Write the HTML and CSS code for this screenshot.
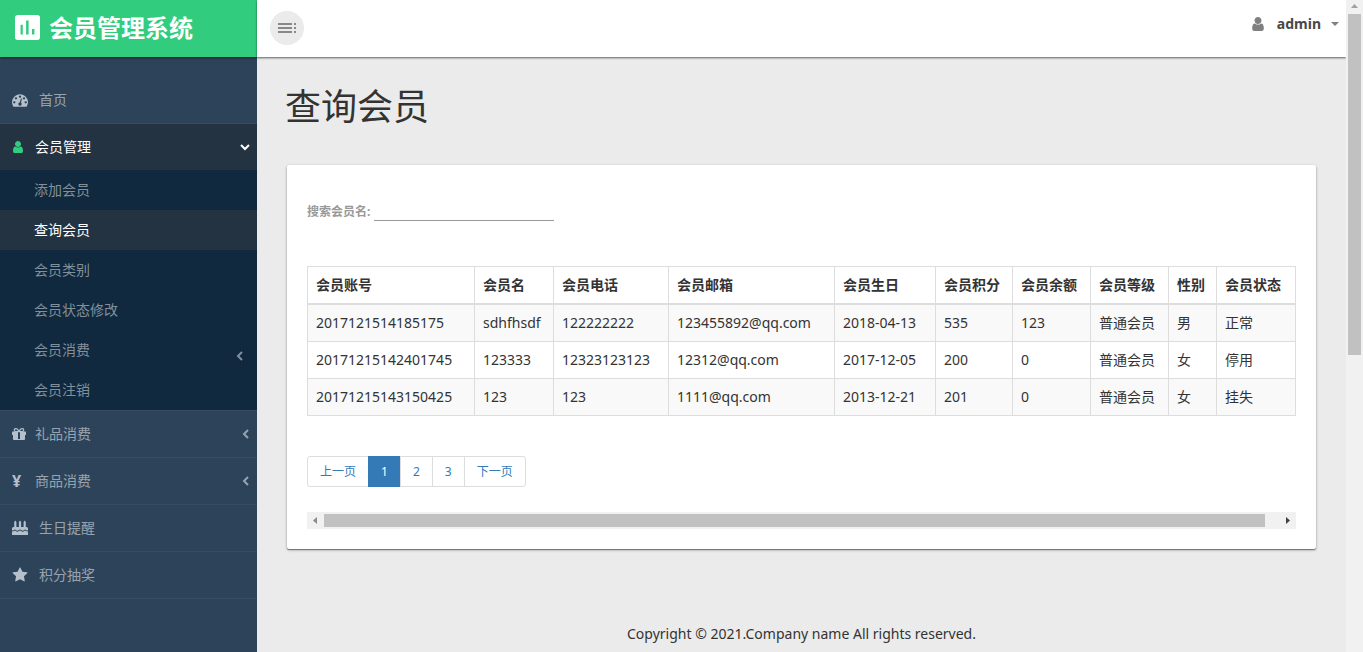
FILE: index.html
```html
<!DOCTYPE html>
<html lang="zh-CN">
<head>
<meta charset="utf-8">
<title>会员管理系统</title>
<link rel="stylesheet" href="styles.css">
</head>
<body>
<div class="app">
  <aside class="sidebar">
    <a class="brand" href="#">
      <svg class="brand-icon" viewBox="3 3 18 18"><path fill="currentColor" fill-rule="evenodd" d="M5 3h14a2 2 0 0 1 2 2v14a2 2 0 0 1-2 2H5a2 2 0 0 1-2-2V5a2 2 0 0 1 2-2zm2 7v7h1.600v-7zm4-3v10h1.800V7zm4.200 6v4h1.800v-4z"/></svg>
      <span>会员管理系统</span>
    </a>
    <nav class="menu">
      <div class="menu-item"><a class="menu-link leaf" href="#">
        <svg class="icon" viewBox="0 0 1792 1792"><path fill="currentColor" d="M384 1152q0-53-37.500-90.500t-90.500-37.500-90.500 37.500-37.500 90.500 37.500 90.500 90.500 37.500 90.500-37.500 37.500-90.500zm192-448q0-53-37.500-90.500t-90.500-37.500-90.500 37.500-37.500 90.500 37.500 90.500 90.500 37.500 90.500-37.500 37.500-90.500zm428 481l101-382q6-26-7.500-48.500t-38.500-29.500-48 6.500-30 39.500l-101 382q-60 5-107 43.500t-63 98.500q-20 77 20 146t117 89 146-20 89-117q16-60-6-117t-72-91zm660-33q0-53-37.500-90.500t-90.500-37.500-90.500 37.500-37.500 90.500 37.500 90.500 90.500 37.500 90.500-37.500 37.500-90.500zm-640-640q0-53-37.500-90.500t-90.500-37.500-90.500 37.500-37.500 90.500 37.500 90.500 90.500 37.500 90.500-37.500 37.500-90.500zm448 192q0-53-37.500-90.500t-90.500-37.500-90.500 37.500-37.500 90.500 37.500 90.500 90.500 37.500 90.500-37.500 37.500-90.500zm320 448q0 261-141 483-19 29-54 29h-1402q-35 0-54-29-141-221-141-483 0-182 71-348t191-286 286-191 348-71 348 71 286 191 191 286 71 348z"/></svg>
        <span>首页</span></a></div>
      <div class="menu-item">
        <a class="menu-link open" href="#">
          <svg class="icon" viewBox="256 0 1536 1792"><path fill="currentColor" d="M1536 1399q0 109-62.500 187t-150.500 78h-854q-88 0-150.500-78t-62.500-187q0-85 8.500-160.500t31.500-152 58.500-131 94-89 134.500-34.500q131 128 313 128t313-128q76 0 134.500 34.500t94 89 58.500 131 31.500 152 8.500 160.500zm-256-887q0 159-112.500 271.500t-271.500 112.500-271.500-112.500-112.500-271.500 112.500-271.500 271.500-112.500 271.500 112.500 112.500 271.500z"/></svg>
          <span>会员管理</span>
          <svg class="chevron" viewBox="0 0 10 10"><path d="M1 3l4 4 4-4"/></svg>
        </a>
        <div class="submenu">
          <a href="#">添加会员</a>
          <a href="#" class="current">查询会员</a>
          <a href="#">会员类别</a>
          <a href="#">会员状态修改</a>
          <a href="#">会员消费<svg class="chevron low" viewBox="0 0 10 10"><path d="M7 1L3 5l4 4"/></svg></a>
          <a href="#">会员注销</a>
        </div>
      </div>
      <div class="menu-item"><a class="menu-link" href="#">
        <svg class="icon" viewBox="0 0 14 14"><path fill="currentColor" fill-rule="evenodd" d="M1 8h12v4.200a.8.800 0 0 1-.8.800H1.800a.8.800 0 0 1-.8-.8zm5 0v4h2V8zM.4 4.500h2.200C.8 2.600 2.200 1 3.800 1 5.500 1 6.300 2.400 7 3.300 7.700 2.400 8.500 1 10.200 1c1.600 0 3 1.600 1.200 3.500h2.200a.4.400 0 0 1 .4.400V8H8V5.300H6V8H0V4.900a.4.400 0 0 1 .4-.4zM3.800 2.300c-1.200 0-1.200 1.700 0 1.700H6C5.200 2.900 4.600 2.300 3.800 2.300zm6.400 0C9.400 2.300 8.800 2.900 8 4h2.200c1.200 0 1.200-1.700 0-1.700z"/></svg>
        <span>礼品消费</span><svg class="chevron" viewBox="2 0 10 10"><path d="M10 1L6 5l4 4"/></svg></a></div>
      <div class="menu-item"><a class="menu-link" href="#">
        <span class="icon yen">¥</span>
        <span>商品消费</span><svg class="chevron" viewBox="2 0 10 10"><path d="M10 1L6 5l4 4"/></svg></a></div>
      <div class="menu-item"><a class="menu-link leaf" href="#">
        <svg class="icon" viewBox="0 0 16 16"><path fill="currentColor" d="M2.200 2L3.300.5 4.400 2v5.500H2.200zM6.900 2L8 .5 9.100 2v5.500H6.900zM11.600 2l1.100-1.500L13.800 2v5.500h-2.200zM1.500 7h13A1.500 1.500 0 0 1 16 8.500v1.800c-1.300 1-1.800-.8-2.700-.8s-1.300 1.200-2.600 1.200S8.900 9.500 8 9.500s-1.400 1.200-2.700 1.200S3.600 9.500 2.700 9.500s-1.400 1.800-2.700.8V8.500A1.500 1.500 0 0 1 1.500 7zM0 11.300c1.500.7 1.900-.7 2.700-.7S4 11.800 5.300 11.800 7.200 10.600 8 10.600s1.400 1.200 2.700 1.200 1.800-1.200 2.600-1.200 1.200 1.400 2.700.7V15H0z"/></svg>
        <span>生日提醒</span></a></div>
      <div class="menu-item"><a class="menu-link leaf" href="#">
        <svg class="icon" viewBox="0 0 1792 1792"><path fill="currentColor" d="M1728 647q0 22-26 48l-363 354 86 500q1 7 1 20 0 21-10.500 35.500t-30.500 14.500q-19 0-40-12l-449-236-449 236q-22 12-40 12-21 0-31.500-14.500t-10.500-35.500q0-6 2-20l86-500-364-354q-25-27-25-48 0-37 56-46l502-73 225-455q19-41 49-41t49 41l225 455 502 73q56 9 56 46z"/></svg>
        <span>积分抽奖</span></a></div>
    </nav>
  </aside>

  <div class="page">
    <header class="topbar">
      <button class="toggle" type="button" aria-label="菜单">
        <svg viewBox="0 0 20 12"><path fill="currentColor" d="M1 1h14v2H1zM1 5h14v2H1zM1 9h14v2H1zM17 1h2v2h-2zM17 5h2v2h-2zM17 9h2v2h-2z"/></svg>
      </button>
      <button class="account" type="button">
        <svg class="user" viewBox="256 128 1280 1536"><path fill="currentColor" d="M1536 1399q0 109-62.500 187t-150.500 78h-854q-88 0-150.500-78t-62.500-187q0-85 8.500-160.500t31.500-152 58.500-131 94-89 134.500-34.500q131 128 313 128t313-128q76 0 134.500 34.500t94 89 58.500 131 31.500 152 8.500 160.500zm-256-887q0 159-112.500 271.500t-271.500 112.500-271.500-112.500-112.500-271.500 112.500-271.500 271.500-112.500 271.500 112.500 112.500 271.500z"/></svg>
        <span>admin</span>
        <svg class="caret" viewBox="0 0 8 5"><path fill="currentColor" d="M0 0h8L4 4z"/></svg>
      </button>
    </header>

    <main class="content">
      <h1>查询会员</h1>
      <section class="card">
        <div class="search">
          <label for="member-name">搜索会员名:</label>
          <input id="member-name" type="text">
        </div>
        <table class="members">
          <colgroup><col class="c-account"><col class="c-name"><col class="c-phone"><col class="c-mail"><col class="c-birth"><col class="c-points"><col class="c-short"><col class="c-short"><col class="c-sex"><col class="c-name"></colgroup>
          <thead><tr><th>会员账号</th><th>会员名</th><th>会员电话</th><th>会员邮箱</th><th>会员生日</th><th>会员积分</th><th>会员余额</th><th>会员等级</th><th>性别</th><th>会员状态</th></tr></thead>
          <tbody>
            <tr><td>2017121514185175</td><td>sdhfhsdf</td><td>122222222</td><td>123455892@qq.com</td><td>2018-04-13</td><td>535</td><td>123</td><td>普通会员</td><td>男</td><td>正常</td></tr>
            <tr><td>20171215142401745</td><td>123333</td><td>12323123123</td><td>12312@qq.com</td><td>2017-12-05</td><td>200</td><td>0</td><td>普通会员</td><td>女</td><td>停用</td></tr>
            <tr><td>20171215143150425</td><td>123</td><td>123</td><td>1111@qq.com</td><td>2013-12-21</td><td>201</td><td>0</td><td>普通会员</td><td>女</td><td>挂失</td></tr>
          </tbody>
        </table>
        <nav class="pagination">
          <a href="#">上一页</a><a href="#" class="active">1</a><a href="#">2</a><a href="#">3</a><a href="#">下一页</a>
        </nav>
        <div class="hscroll">
          <svg viewBox="0 0 17 17"><path fill="#8b8b8b" d="M10 5v7L6 8.500z"/></svg>
          <div class="hthumb"></div>
          <svg viewBox="0 0 17 17"><path fill="#404040" d="M7 5v7l4-3.500z"/></svg>
        </div>
      </section>
      <footer>Copyright © 2021.Company name All rights reserved.</footer>
    </main>
  </div>

  <div class="vscroll">
    <svg viewBox="0 0 17 14"><path fill="#a0a0a0" d="M5 8h7L8.500 4z"/></svg>
    <div class="vthumb"></div>
  </div>
</div>
</body>
</html>
```
FILE: styles.css
```css
* { box-sizing: border-box; }

body {
  margin: 0;
  font: 14px/20px "Noto Sans", "Noto Sans CJK SC", sans-serif;
  color: #333;
  background: #ebebeb;
}

a { color: inherit; text-decoration: none; }
button { border: 0; padding: 0; font: inherit; cursor: pointer; }
svg { display: block; flex: none; }

.app { display: flex; min-height: 100vh; }

.sidebar { flex: none; width: 257px; background: #2d4359; color: #97a4b0; }

.brand {
  display: flex;
  align-items: center;
  gap: 9px;
  height: 57px;
  padding: 0 0 2px 15px;
  background: #32cc7e;
  color: #fff;
  font-size: 24px;
  font-weight: 700;
  box-shadow: 0 1px 2px rgba(0, 0, 0, .5);
}
.brand-icon { width: 25px; height: 25px; }

.menu { padding-top: 20px; }
.menu-item { border-bottom: 1px solid #364c62; }
.menu-link {
  display: flex;
  align-items: center;
  gap: 9px;
  height: 46px;
  padding: 0 7px 0 12px;
}
.menu-link .icon { width: 14px; height: 14px; color: #b4c0cb; }
.menu-link.leaf { gap: 11px; }
.menu-link.leaf .icon { width: 16px; height: 16px; }
.menu-link.open { background: #243341; color: #fff; }
.menu-link.open .icon { color: #32cc7e; }
.menu-link .yen { font-size: 16px; font-weight: 700; line-height: 14px; }

.chevron {
  width: 10px;
  height: 10px;
  margin-left: auto;
  fill: none;
  stroke: currentColor;
  stroke-width: 2;
}

.submenu { background: #10293e; color: #82909c; }
.submenu a {
  display: flex;
  align-items: center;
  height: 40px;
  padding: 0 12px 0 34px;
}
.submenu .current { background: #243341; color: #fff; }
.chevron.low { margin-top: 12px; }

.page { flex: 1; min-width: 0; display: flex; flex-direction: column; }

.topbar {
  display: flex;
  justify-content: space-between;
  height: 57px;
  padding: 11px 7px 0 13px;
  background: #fff;
  box-shadow: 0 1px 2px rgba(0, 0, 0, .6);
}
.toggle {
  display: flex;
  align-items: center;
  justify-content: center;
  width: 34px;
  height: 34px;
  border-radius: 50%;
  background: #ebebeb;
  color: #888;
}
.toggle svg { width: 20px; height: 12px; }
.account {
  display: flex;
  align-items: center;
  height: 26px;
  background: none;
  font-weight: 700;
  color: #484848;
}
.user { width: 12px; height: 14px; margin-right: 13px; color: #808080; }
.caret { width: 8px; height: 5px; margin-left: 10px; color: #808080; }

.content { flex: 1; padding: 30px 30px 8px; }
h1 { margin: 0 0 38px -2px; font-size: 36px; line-height: 40px; font-weight: 400; }

.card {
  padding: 30px 20px 20px;
  border-radius: 2px;
  background: #fff;
  box-shadow: 0 1px 3px rgba(0, 0, 0, .3), 0 1px 1px rgba(0, 0, 0, .4);
}

.search { display: flex; align-items: center; gap: 4px; margin-bottom: 45px; }
.search label { font-size: 12px; line-height: 18px; font-weight: 700; color: #999; padding-top: 8px; }
.search input {
  width: 180px;
  height: 26px;
  padding: 0 4px;
  border: 0;
  border-bottom: 1px solid #999;
  background: none;
  font: inherit;
}

.members { width: 100%; table-layout: fixed; border-collapse: collapse; }
.members th, .members td {
  height: 37px;
  padding: 8px;
  border: 1px solid #ddd;
  text-align: left;
  white-space: nowrap;
}
.members th { border-bottom-width: 2px; }
.members tbody tr:nth-child(odd) { background: #f9f9f9; }
.c-account { width: 167px; }
.c-name { width: 79px; }
.c-phone { width: 115px; }
.c-mail { width: 166px; }
.c-birth { width: 101px; }
.c-points { width: 77px; }
.c-short { width: 78px; }
.c-sex { width: 48px; }

.pagination { display: flex; margin: 40px 0 25px; font-size: 12px; color: #337ab7; }
.pagination a {
  padding: 5px 12px;
  line-height: 19px;
  border: 1px solid #ddd;
  margin-left: -1px;
}
.pagination a:first-child { margin-left: 0; border-radius: 3px 0 0 3px; }
.pagination a:last-child { border-radius: 0 3px 3px 0; }
.pagination .active { background: #337ab7; border-color: #337ab7; color: #fff; }

.hscroll { display: flex; align-items: center; height: 17px; background: #f1f1f1; }
.hscroll svg { width: 17px; height: 17px; }
.hthumb { flex: 1; height: 13px; margin-right: 14px; background: #c1c1c1; }

footer { margin-top: 75px; text-align: center; }

.vscroll { flex: none; width: 17px; background: #f1f1f1; }
.vscroll svg { width: 17px; height: 14px; }
.vthumb { width: 13px; height: 341px; margin-left: 2px; background: #c1c1c1; }
```
